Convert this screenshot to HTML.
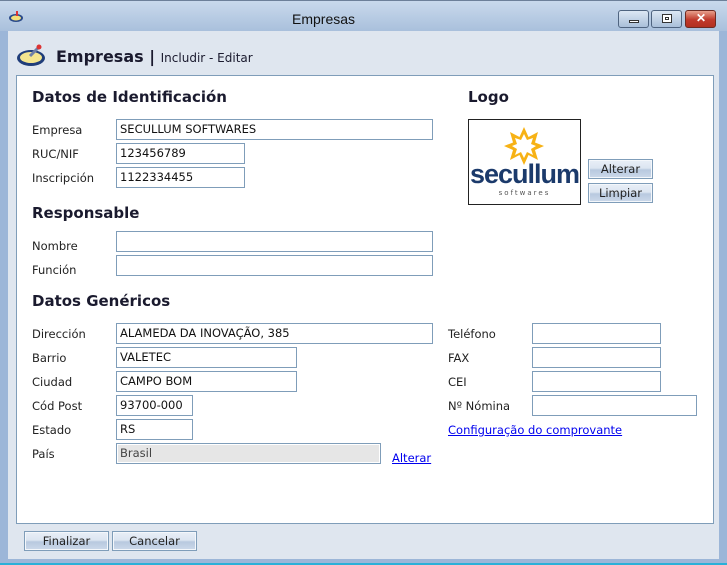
<!DOCTYPE html>
<html><head><meta charset="utf-8"><style>
*{margin:0;padding:0;box-sizing:border-box}
body{width:727px;height:565px;overflow:hidden;background:#9cb6d8;font-family:"DejaVu Sans","Liberation Sans",sans-serif;font-size:11.5px;color:#222;position:relative}
.a{position:absolute}
.title{left:0;top:0;width:727px;height:31px;background:linear-gradient(#c9d9ec,#a9c0dc);border-top:1px solid #6d8099}
.client{left:8px;top:31px;width:711px;height:528px;background:#dfe6ef}
.panel{left:16px;top:75px;width:698px;height:449px;background:#fff;border:1px solid #7f9db9}
.lbl{font-size:11.5px;color:#222}
.in{border:1px solid #7f9db9;background:#fff;height:21px;font-size:11.5px;padding:2px 0 0 3px;color:#111}
h2{position:absolute;font-size:15px;font-weight:bold;color:#1a1a2e}
.btn{border:1px solid #7f9db9;background:linear-gradient(#e9eff7 0%,#dce5f1 45%,#b8c9df 55%,#ccd9ea 100%);text-align:center;font-size:11.5px;color:#222;padding-top:2px;box-shadow:inset 0 0 0 1px #f4f7fb}
.link{color:#0000ee;text-decoration:underline;font-size:11.5px}
.wb{top:10px;height:18px;border:1px solid #4f6480;border-radius:3px;background:linear-gradient(#dce7f4,#a9bfd9)}
</style></head><body>
<div class="a title"></div>
<div class="a" style="left:292px;top:11px;font-family:'Liberation Sans',sans-serif;font-size:14px;color:#111">Empresas</div>
<svg class="a" style="left:8px;top:9px" width="16" height="14" viewBox="0 0 16 14"><ellipse cx="8" cy="9" rx="7" ry="4" fill="#2a4a8a"/><ellipse cx="8" cy="9" rx="5" ry="2.5" fill="#f4e07a"/><rect x="8" y="2" width="2" height="5" fill="#d33"/></svg>
<div class="a wb" style="left:618px;width:31px"><div class="a" style="left:10px;top:9px;width:10px;height:3px;background:#fff;border:1px solid #333"></div></div>
<div class="a wb" style="left:651px;width:31px"><div class="a" style="left:10px;top:3px;width:10px;height:9px;border:1px solid #333;background:#fff"><div style="margin:2px;height:3px;border:1px solid #333"></div></div></div>
<div class="a wb" style="left:685px;width:31px;background:linear-gradient(#e8a08c,#c0392b 55%,#b23020);border-color:#6d2a22"><div class="a" style="left:10px;top:0px;color:#fff;font-weight:bold;font-size:12px;font-family:'Liberation Sans',sans-serif">✕</div></div>
<div class="a client"></div>
<svg class="a" style="left:16px;top:43px" width="32" height="24" viewBox="0 0 32 24"><ellipse cx="15" cy="15" rx="14" ry="8" fill="#1f3d7a"/><ellipse cx="15" cy="14.5" rx="11" ry="5.5" fill="#f3e58f"/><path d="M14 13 L22 5" stroke="#6d7fa8" stroke-width="3"/><circle cx="23" cy="4" r="2.5" fill="#d33"/></svg>
<div class="a" style="left:56px;top:47px;font-size:16px;font-weight:bold;color:#1a1a2e">Empresas <span style="font-weight:bold">|</span> <span style="font-size:12px;font-weight:normal">Includir - Editar</span></div>
<div class="a panel"></div>
<h2 style="left:32px;top:88px">Datos de Identificación</h2>
<h2 style="left:468px;top:88px">Logo</h2>
<div class="a lbl" style="left:32px;top:123px">Empresa</div><div class="a in" style="left:116px;top:119px;width:317px">SECULLUM SOFTWARES</div>
<div class="a lbl" style="left:32px;top:147px">RUC/NIF</div><div class="a in" style="left:116px;top:143px;width:129px">123456789</div>
<div class="a lbl" style="left:32px;top:171px">Inscripción</div><div class="a in" style="left:116px;top:167px;width:129px">1122334455</div>
<div class="a" style="left:468px;top:119px;width:113px;height:86px;border:1px solid #222;background:#fff">
<svg class="a" style="left:34px;top:6px" width="42" height="40" viewBox="0 0 42 40"><polygon points="21,1 25.5,11 35,6 32,16.5 41,20 32,24 35,34 25.5,29 21,39 16.5,29 7,34 10,24 1,20 10,16.5 7,6 16.5,11" fill="#f7b215"/><polygon points="21,8 24,14 30,12 28,18 33,20 28,23 30,29 24,26 21,32 18,26 12,29 14,23 9,20 14,18 12,12 18,14" fill="#fff"/></svg>
<div class="a" style="left:0;top:39px;width:111px;text-align:center;font-family:'Liberation Sans',sans-serif;font-weight:bold;font-size:27px;color:#1b3a6b;letter-spacing:-1px">secullum</div>
<div class="a" style="left:0;top:69px;width:111px;text-align:center;font-size:7px;color:#555;letter-spacing:2px">softwares</div>
</div>
<div class="a btn" style="left:588px;top:159px;width:65px;height:20px">Alterar</div>
<div class="a btn" style="left:588px;top:183px;width:65px;height:20px">Limpiar</div>
<h2 style="left:32px;top:204px">Responsable</h2>
<div class="a lbl" style="left:32px;top:239px">Nombre</div><div class="a in" style="left:116px;top:231px;width:317px"></div>
<div class="a lbl" style="left:32px;top:263px">Función</div><div class="a in" style="left:116px;top:255px;width:317px"></div>
<h2 style="left:32px;top:292px">Datos Genéricos</h2>
<div class="a lbl" style="left:32px;top:327px">Dirección</div><div class="a in" style="left:116px;top:323px;width:317px">ALAMEDA DA INOVAÇÃO, 385</div>
<div class="a lbl" style="left:32px;top:351px">Barrio</div><div class="a in" style="left:116px;top:347px;width:181px">VALETEC</div>
<div class="a lbl" style="left:32px;top:375px">Ciudad</div><div class="a in" style="left:116px;top:371px;width:181px">CAMPO BOM</div>
<div class="a lbl" style="left:32px;top:399px">Cód Post</div><div class="a in" style="left:116px;top:395px;width:77px">93700-000</div>
<div class="a lbl" style="left:32px;top:423px">Estado</div><div class="a in" style="left:116px;top:419px;width:77px">RS</div>
<div class="a lbl" style="left:32px;top:447px">País</div><div class="a in" style="left:116px;top:443px;width:265px;background:#e6e6e6;color:#444;box-shadow:inset 0 0 0 1px #fff">Brasil</div>
<div class="a link" style="left:392px;top:451px">Alterar</div>
<div class="a lbl" style="left:448px;top:327px">Teléfono</div><div class="a in" style="left:532px;top:323px;width:129px"></div>
<div class="a lbl" style="left:448px;top:351px">FAX</div><div class="a in" style="left:532px;top:347px;width:129px"></div>
<div class="a lbl" style="left:448px;top:375px">CEI</div><div class="a in" style="left:532px;top:371px;width:129px"></div>
<div class="a lbl" style="left:448px;top:399px">Nº Nómina</div><div class="a in" style="left:532px;top:395px;width:165px"></div>
<div class="a link" style="left:448px;top:423px">Configuração do comprovante</div>
<div class="a btn" style="left:24px;top:531px;width:85px;height:20px">Finalizar</div>
<div class="a btn" style="left:112px;top:531px;width:85px;height:20px">Cancelar</div>
<div class="a" style="left:0;top:563px;width:727px;height:2px;background:#2ab0d8"></div>
</body></html>
